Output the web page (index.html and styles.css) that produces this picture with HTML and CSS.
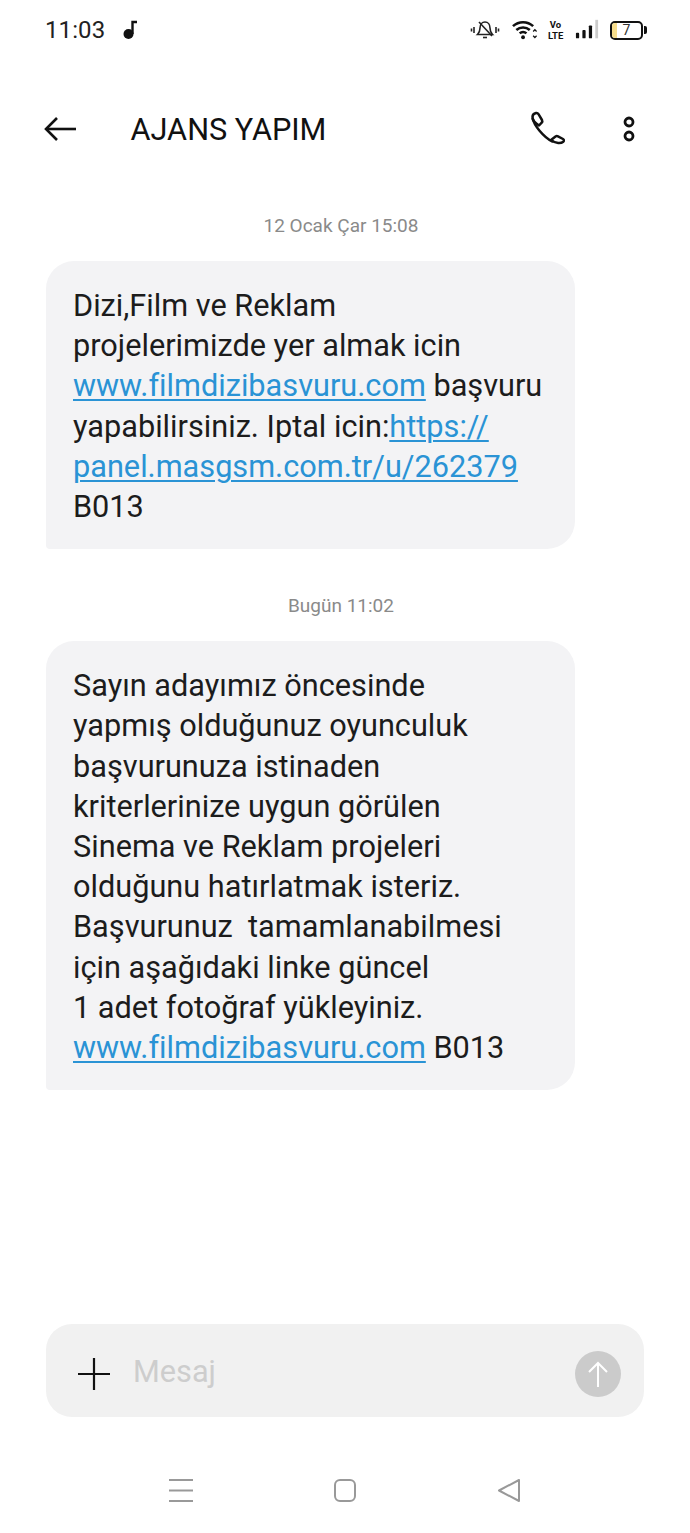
FILE: index.html
```html
<!DOCTYPE html>
<html lang="tr">
<head>
<meta charset="utf-8">
<title>AJANS YAPIM</title>
<link rel="stylesheet" href="styles.css">
</head>
<body>
<div class="screen">
  <div class="status">
    <div class="status-left">
      <span class="clock">11:03</span>
      <svg class="note" width="16" height="20" viewBox="0 0 16 20"><circle cx="6.500" cy="14" r="5" fill="#111"/><path d="M10.500 14V2h4.500" fill="none" stroke="#111" stroke-width="2.400"/></svg>
    </div>
    <div class="status-right">
      <svg width="30" height="22" viewBox="0 0 30 22" fill="none" stroke="#222" stroke-width="1.600"><path d="M15 3c-3 0-5 2.500-5 6 0 3-1 5-2.500 6.500h15C21 14 20 12 20 9c0-3.500-2-6-5-6z"/><path d="M9 3l13 14"/><path d="M13 18.500h4"/><path d="M4 8v6M1.500 9.500v3M26 8v6M28.500 9.500v3"/></svg>
      <svg width="25" height="22" viewBox="0 0 26 22" fill="none" stroke="#111" stroke-width="2.700"><path d="M1 7c6-5.500 15-5.500 21 0"/><path d="M4.500 11c4-3.500 10-3.500 14 0"/><path d="M8 14.500c2-1.800 5-1.800 7 0"/><circle cx="11.500" cy="18.500" r="2" fill="#111" stroke="none"/><path d="M22 12.500l1.800-1.800 1.800 1.800M22 17l1.800 1.800 1.800-1.800" stroke-width="1.300"/></svg>
      <span class="volte">Vo<br>LTE</span>
      <svg width="24" height="22" viewBox="0 0 26 22"><rect x="1" y="14" width="3.500" height="6" rx="1" fill="#111"/><rect x="8" y="11" width="3.500" height="9" rx="1" fill="#111"/><rect x="15" y="6" width="3.500" height="14" rx="1" fill="#111"/><rect x="22" y="0" width="3" height="20" fill="#ccc"/></svg>
      <div class="battery"><span class="battery-fill"></span><span class="battery-num">7</span></div>
    </div>
  </div>

  <header class="topbar">
    <svg class="back" width="32" height="26" viewBox="0 0 32 26" fill="none" stroke="#111" stroke-width="2.600"><path d="M2 13h30"/><path d="M13 2L2 13l11 11"/></svg>
    <h1 class="title">AJANS YAPIM</h1>
    <svg class="phone" width="36" height="36" viewBox="0 0 36 36" fill="none" stroke="#111" stroke-width="2.500" stroke-linejoin="round"><path d="M3.500 6C3.500 4 5 2.500 7 2c1-.2 2 .4 2.500 1.200L13 9c.5 1 .3 2-.3 2.700L10 14.500C6 12 3.500 9 3.500 6z"/><path d="M3.500 7C5 14 14 26 24 31"/><path d="M22 29l4.500-3.500c.8-.5 1.700-.5 2.500-.1l5 2.600c1 .6 1.200 1.800.3 2.700C32 32.500 27 32.800 22 29z"/></svg>
    <svg class="more" width="14" height="28" viewBox="0 0 14 28" fill="none" stroke="#111" stroke-width="2.800"><circle cx="7" cy="7" r="4"/><circle cx="7" cy="21" r="4"/></svg>
  </header>

  <main class="thread">
    <div class="stamp">12 Ocak Çar 15:08</div>
    <div class="bubble">Dizi,Film ve Reklam<br>projelerimizde yer almak icin<br><a class="link">www.filmdizibasvuru.com</a> başvuru<br>yapabilirsiniz. Iptal icin:<a class="link">https://</a><br><a class="link">panel.masgsm.com.tr/u/262379</a><br>B013</div>
    <div class="stamp">Bugün 11:02</div>
    <div class="bubble">Sayın adayımız öncesinde<br>yapmış olduğunuz oyunculuk<br>başvurunuza istinaden<br>kriterlerinize uygun görülen<br>Sinema ve Reklam projeleri<br>olduğunu hatırlatmak isteriz.<br>Başvurunuz&nbsp; tamamlanabilmesi<br>için aşağıdaki linke güncel<br>1 adet fotoğraf yükleyiniz.<br><a class="link">www.filmdizibasvuru.com</a> B013</div>
  </main>

  <div class="composer">
    <svg class="plus" width="32" height="32" viewBox="0 0 32 32" stroke="#111" stroke-width="2.200"><path d="M0 16h32M16 0v32"/></svg>
    <span class="placeholder">Mesaj</span>
    <div class="send"><svg width="22" height="26" viewBox="0 0 22 26" fill="none" stroke="#fff" stroke-width="2"><path d="M11 2v24M2 11l9-9 9 9"/></svg></div>
  </div>

  <nav class="navbar">
    <svg width="24" height="23" viewBox="0 0 24 23" stroke="#999" stroke-width="2"><path d="M0 1h24M0 11.500h24M0 22h24"/></svg>
    <svg width="24" height="23" viewBox="0 0 24 23" fill="none" stroke="#999" stroke-width="2"><rect x="2" y="1" width="20" height="21" rx="5"/></svg>
    <svg width="24" height="23" viewBox="0 0 24 23" fill="none" stroke="#999" stroke-width="2" stroke-linejoin="round"><path d="M22 1v21L2 11.500z"/></svg>
  </nav>
</div>
</body>
</html>
```
FILE: styles.css
```css
* { box-sizing: border-box; }
html, body { margin: 0; padding: 0; background: #fff; }
.screen {
  width: 690px;
  height: 1533px;
  display: flex;
  flex-direction: column;
  font-family: Roboto, "Noto Sans", sans-serif;
  color: #1a1a1a;
  overflow: hidden;
}
.status {
  height: 60px;
  display: flex;
  align-items: center;
  justify-content: space-between;
  padding: 0 47px 0 45px;
}
.status-left { display: flex; align-items: center; gap: 17px; }
.clock { font-size: 24px; letter-spacing: 0.1px; color: #222; }
.status-right { display: flex; align-items: center; gap: 11.500px; }
.volte {
  font-size: 9.500px;
  line-height: 11.500px;
  font-weight: 700;
  width: 15px;
  text-align: center;
  color: #111;
}
.battery {
  position: relative;
  width: 33px;
  height: 19px;
  border: 2px solid #111;
  border-radius: 5px;
  display: flex;
  align-items: center;
  justify-content: center;
}
.battery::after {
  content: "";
  position: absolute;
  right: -6px;
  top: 3.500px;
  width: 3px;
  height: 8px;
  background: #111;
  border-radius: 0 2px 2px 0;
}
.battery-fill { position: absolute; left: 0; top: 0; bottom: 0; width: 5px; background: #f5dc8c; border-radius: 3px 0 0 3px; }
.battery-num { font-size: 14px; line-height: 14px; color: #333; }
.topbar {
  height: 80px;
  margin-top: 30px;
  display: flex;
  align-items: center;
  padding: 0 54px 3px 44px;
}
.title {
  margin: 2px 0 0 54.500px;
  flex: 1;
  font-size: 30.700px;
  font-weight: 400;
  color: #111;
}
.more { margin-left: 57px; }
.thread { flex: 1; display: flex; flex-direction: column; padding: 0 46px; }
.stamp {
  height: 51px;
  margin-top: 41px;
  padding-top: 5px;
  margin-right: 8px;
  text-align: center;
  font-size: 19px;
  line-height: 21px;
  color: #8a8a8a;
}
.thread .stamp:first-child { margin-top: 40px; }
.bubble {
  width: 529px;
  padding: 25px 20px 22px 27px;
  background: #f3f3f5;
  border-radius: 28px 28px 28px 4px;
  font-size: 30.700px;
  line-height: 40.200px;
  color: #1c1c1c;
  white-space: nowrap;
}
.link { color: #2a93d5; text-decoration: underline; text-decoration-thickness: 1.500px; text-underline-offset: 3px; }
.composer {
  height: 93px;
  margin: 0 46px;
  background: #f1f1f1;
  border-radius: 26px;
  display: flex;
  align-items: center;
  padding: 6px 23px 0 32px;
}
.placeholder { margin: -4px 0 0 23px; flex: 1; font-size: 30.700px; color: #cdcdcd; }
.send {
  width: 46px;
  height: 46px;
  border-radius: 50%;
  background: #cbcbcb;
  display: flex;
  align-items: center;
  justify-content: center;
}
.navbar {
  height: 116px;
  display: flex;
  align-items: center;
  justify-content: center;
  gap: 140px;
  padding: 30px 0 0 0;
}
```
